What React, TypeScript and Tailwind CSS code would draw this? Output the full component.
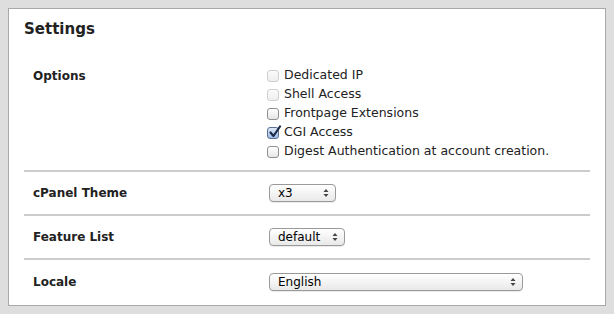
const options = [
  { label: "Dedicated IP", disabled: true, checked: false },
  { label: "Shell Access", disabled: true, checked: false },
  { label: "Frontpage Extensions", disabled: false, checked: false },
  { label: "CGI Access", disabled: false, checked: true },
  { label: "Digest Authentication at account creation.", disabled: false, checked: false },
];

function Checkbox({ checked, disabled }: { checked: boolean; disabled: boolean }) {
  let cls =
    "relative inline-block h-[12px] w-[12px] shrink-0 rounded-[3px] border border-[#8f8f8f] bg-gradient-to-b from-[#ffffff] to-[#e6e6e6]";
  if (disabled)
    cls =
      "relative inline-block h-[12px] w-[12px] shrink-0 rounded-[3px] border border-[#cfcfcf] bg-gradient-to-b from-[#fbfbfb] to-[#eeeeee]";
  if (checked)
    cls =
      "relative inline-block h-[12px] w-[12px] shrink-0 rounded-[3px] border border-[#5b6f95] bg-gradient-to-b from-[#dde9f8] to-[#9fbde6]";
  return (
    <span className={cls}>
      {checked && (
        <svg viewBox="0 0 14 14" className="absolute -top-[3px] left-0 h-[14px] w-[14px]">
          <path d="M2.5 7.5 L5.5 11 L12 1.5" fill="none" stroke="#1d2a4a" strokeWidth="2.2" strokeLinecap="round" strokeLinejoin="round" />
        </svg>
      )}
    </span>
  );
}

function Select({ value, width }: { value: string; width: string }) {
  return (
    <div
      className={`flex h-[18px] ${width} items-center justify-between rounded-[4px] border border-[#9a9a9a] bg-gradient-to-b from-[#ffffff] to-[#e9e9e9] pl-[8px] pr-[6px] text-[12px] text-black shadow-[0_1px_0_rgba(0,0,0,0.08)]`}
    >
      <span>{value}</span>
      <svg viewBox="0 0 6 10" className="h-[10px] w-[6px]">
        <path d="M0.5 4 L3 1 L5.5 4 Z" fill="#444" />
        <path d="M0.5 6 L3 9 L5.5 6 Z" fill="#444" />
      </svg>
    </div>
  );
}

export default function App() {
  return (
    <div className="h-[314px] w-[614px] bg-[#dedede] p-[8px] font-['DejaVu_Sans',sans-serif]">
      <div className="h-[298px] border border-[#a9a9a9] bg-white px-[15px]">
        <h2 className="mt-[10px] h-[20px] text-[15px] font-bold leading-[20px] text-[#222]">Settings</h2>

        <div className="mt-[27px] flex h-[106px] border-b-2 border-[#cccccc]">
          <div className="w-[243px] pl-[9px] pt-[1px] text-[12px] font-bold leading-[19px] text-[#222]">Options</div>
          <div className="flex flex-col">
            {options.map((o) => (
              <label key={o.label} className="flex h-[19px] items-center gap-[5px] text-[12.5px] text-[#222]">
                <Checkbox checked={o.checked} disabled={o.disabled} />
                <span>{o.label}</span>
              </label>
            ))}
          </div>
        </div>

        <div className="flex h-[44px] items-center border-b-2 border-[#cccccc]">
          <div className="w-[245px] pl-[9px] text-[12px] font-bold text-[#222]">cPanel Theme</div>
          <Select value="x3" width="w-[67px]" />
        </div>

        <div className="flex h-[44px] items-center border-b-2 border-[#cccccc]">
          <div className="w-[245px] pl-[9px] text-[12px] font-bold text-[#222]">Feature List</div>
          <Select value="default" width="w-[76px]" />
        </div>

        <div className="flex h-[44px] items-center">
          <div className="w-[245px] pl-[9px] text-[12px] font-bold text-[#222]">Locale</div>
          <Select value="English" width="w-[254px]" />
        </div>
      </div>
    </div>
  );
}
